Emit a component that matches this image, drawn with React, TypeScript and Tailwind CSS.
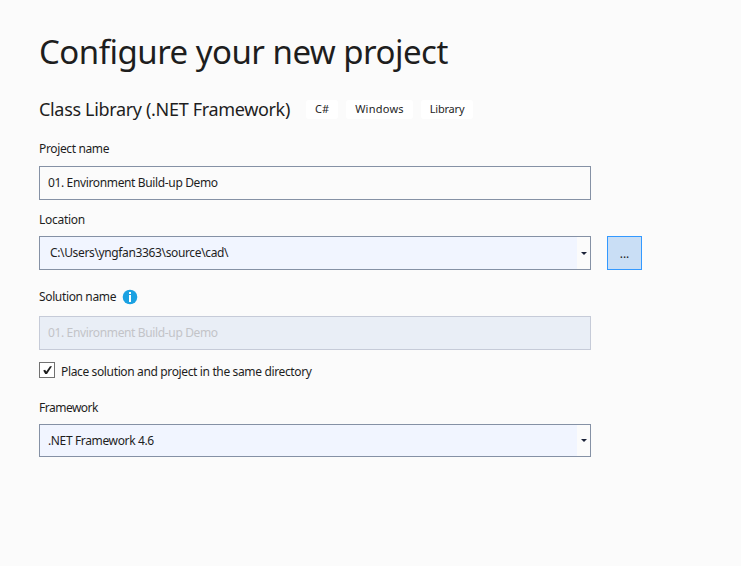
import { ReactNode } from "react";

function Tag({ className, children }: { className: string; children: ReactNode }) {
  return (
    <span className={`flex h-[19px] items-center justify-center rounded-[3px] bg-white text-[11px] whitespace-nowrap ${className}`}>
      {children}
    </span>
  );
}

function Combo({ className, children }: { className: string; children: ReactNode }) {
  return (
    <div className={`flex w-[552px] border border-[#8591a5] bg-[#f1f5ff] ${className}`}>
      <div className="flex flex-1 items-center">{children}</div>
      <div className="flex w-[13px] items-center justify-center bg-[#fbfbfb]">
        <svg width="6" height="3" viewBox="0 0 6 3">
          <path d="M0 0H6L3 3Z" fill="#1b2238" />
        </svg>
      </div>
    </div>
  );
}

export default function App() {
  return (
    <main className="h-[566px] w-[741px] overflow-hidden bg-[#fbfbfb] pl-[39px] font-['Noto_Sans','Open_Sans',sans-serif] text-[12px] leading-4 tracking-[-0.36px] text-[#1e1e1e]">
      <h1 className="h-[89px] pt-[30px] text-[33px] leading-[44px] tracking-[-0.52px] whitespace-nowrap">
        <span className="inline-block">Configure your new project</span>
      </h1>
      <div className="flex h-[40px] items-center">
        <h2 className="w-[267px] text-[18px] leading-6 tracking-[-0.33px] whitespace-nowrap">
          <span>Class Library (.NET Framework)</span>
        </h2>
        <div className="flex gap-2">
          <Tag className="w-8 tracking-normal"><span>C#</span></Tag>
          <Tag className="w-[67px] tracking-[0.25px]"><span>Windows</span></Tag>
          <Tag className="w-[52px] tracking-[-0.2px]"><span>Library</span></Tag>
        </div>
      </div>

      <div className="h-[37px] pt-3"><span>Project name</span></div>
      <div className="flex h-[34px] w-[552px] items-center border border-[#8591a5] pl-2">
        <span>01. Environment Build-up Demo</span>
      </div>

      <div className="h-9 pt-3 tracking-[-0.28px]"><span>Location</span></div>
      <div className="flex gap-4">
        <Combo className="h-[34px] pl-[10px]"><span>C:\Users\yngfan3363\source\cad\</span></Combo>
        <button className="flex h-[34px] w-[35px] items-center justify-center border border-[#3399ff] bg-[#c9def5] pt-[2px] tracking-normal">
          <span>...</span>
        </button>
      </div>

      <div className="flex h-[46px] pt-[19px]">
        <span className="w-[83px]">Solution name</span>
        <svg width="16" height="16" viewBox="0 0 16 16">
          <circle cx="8" cy="8" r="7.3" fill="#1ba1e2" />
          <path d="M7 3H9V5H7ZM7 6H9V13H7Z" fill="#fff" />
        </svg>
      </div>
      <div className="flex h-[34px] w-[552px] items-center border border-[#c6cbd8] bg-[#e9eef6] pl-2 text-[#c3c4c8]">
        <span>01. Environment Build-up Demo</span>
      </div>

      <div className="flex h-[49px] gap-[6px] pt-3">
        <div className="h-4 w-4 border border-[#717171] bg-white">
          <svg width="14" height="14" viewBox="0 0 14 14">
            <path d="M3.2 7.4L5.1 6.8L6.3 8.6L10 3.2H12L7 11H5.2Z" fill="#1e1e1e" />
          </svg>
        </div>
        <span className="mt-[2px] h-4">Place solution and project in the same directory</span>
      </div>

      <div className="h-[25px] pt-px tracking-[-0.5px]"><span>Framework</span></div>
      <Combo className="h-[33px] pl-2"><span>.NET Framework 4.6</span></Combo>
    </main>
  );
}
